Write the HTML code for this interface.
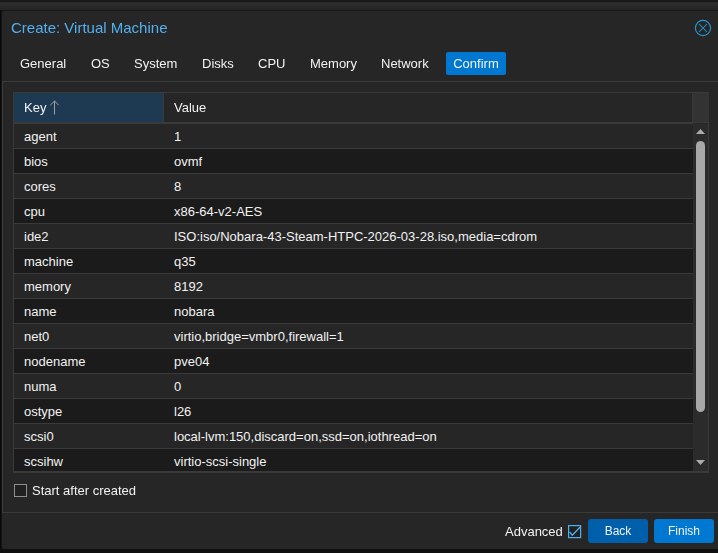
<!DOCTYPE html>
<html><head><meta charset="utf-8">
<style>
*{box-sizing:border-box;margin:0;padding:0}
html,body{width:718px;height:553px;overflow:hidden;background:#181818;font-family:"Liberation Sans",sans-serif;font-size:13px;color:#f2f2f2}
div,svg{position:absolute}
#topband{left:0;top:2px;width:718px;height:8px;background:linear-gradient(#282828 0px,#2d2d2d 1.5px,#292929 4px,#232323 8px)}
#leftshade{left:0;top:10px;width:2px;height:543px;background:linear-gradient(90deg,#080808 50%,#151515 50%)}
#botshade{left:0;top:549px;width:718px;height:4px;background:#0f0f0f}
#win{left:2px;top:11px;width:730px;height:538px;background:#262626;border-radius:3px}
.gs{will-change:transform}
#title{left:11px;top:19px;font-size:15px;color:#52b0ee;white-space:nowrap}
.tab{top:55px;height:17px;line-height:17px;white-space:nowrap}
#confirm{left:446px;top:52px;width:60px;height:23px;background:#0077d0;border-radius:2px;line-height:23px;text-align:center}
#body{left:2px;top:81px;width:730px;height:432px;border:1px solid #3a3a3a;border-right:none}
#grid{left:13px;top:92px;width:696px;height:381px;background:#262626;border:1px solid #3a3a3a;border-bottom-width:2px}
#hkey{left:14px;top:93px;width:149px;height:29px;background:#1d3a52}
#hsep{left:163px;top:93px;width:1px;height:29px;background:#3a3a3a}
#hsep2{left:692px;top:93px;width:1px;height:29px;background:#3a3a3a}
#hfill{left:693px;top:93px;width:16px;height:29px;background:#333333}
#hline{left:14px;top:122px;width:679px;height:2px;background:#3a3a3a}
#hline2{left:693px;top:122px;width:16px;height:1px;background:#3a3a3a}
.hdrtxt{top:100px;white-space:nowrap}
.row{left:14px;width:679px;height:25px;border-bottom:1px solid #3a3a3a}
.row span{position:absolute;top:5px;white-space:nowrap}
.row .k{left:10px}
.row .v{left:160px}
.odd{background:#262626}
.even{background:#1b1b1b}
#sb{left:693px;top:124px;width:15px;height:347px;background:#2b2b2b}
#thumb{left:696px;top:141px;width:9px;height:271px;background:#a8a8a8;border-radius:4.5px}
#start{left:14px;top:484px;width:13px;height:13px;border:1px solid #8e8e8e;background:#202020}
#startlbl{left:32px;top:483px;white-space:nowrap}
#adv{left:505px;top:524px;white-space:nowrap}
.btn{top:519px;height:24px;line-height:24px;text-align:center;border-radius:3px;color:#f2f2f2;font-size:12px}
#back{left:588px;width:60px;background:#005fab}
#finish{left:654px;width:60px;background:#0077d0}
</style></head><body>
<div id="topband"></div>
<div id="leftshade"></div>
<div id="botshade"></div>
<div id="win"></div>
<div id="title" class="gs">Create: Virtual Machine</div>
<svg style="left:694px;top:19px" width="18" height="18" viewBox="0 0 18 18"><circle cx="9" cy="9" r="7.6" fill="none" stroke="#2896d0" stroke-width="1.15"/><path d="M5 5L13 13M13 5L5 13" stroke="#2896d0" stroke-width="1.05"/></svg>
<div class="tab gs" style="left:20px">General</div>
<div class="tab gs" style="left:91px">OS</div>
<div class="tab gs" style="left:134px">System</div>
<div class="tab gs" style="left:202px">Disks</div>
<div class="tab gs" style="left:258px">CPU</div>
<div class="tab gs" style="left:310px">Memory</div>
<div class="tab gs" style="left:381px">Network</div>
<div id="confirm" class="gs">Confirm</div>
<div id="body"></div>
<div id="grid"></div>
<div id="hkey"></div>
<div id="hsep"></div>
<div id="hsep2"></div>
<div id="hfill"></div>
<div id="hline"></div>
<div id="hline2"></div>
<div class="hdrtxt gs" style="left:24px">Key</div>
<svg style="left:50px;top:100px" width="10" height="15" viewBox="0 0 10 15"><path d="M4.5 0.8V14.5M0.3 5.2L4.5 1L8.7 5.2" fill="none" stroke="#a0a0a0" stroke-width="1"/></svg>
<div class="hdrtxt gs" style="left:174px">Value</div>
<div class="row odd" style="top:124px;height:25px"><span class="k">agent</span><span class="v">1</span></div>
<div class="row even" style="top:149px;height:25px"><span class="k">bios</span><span class="v">ovmf</span></div>
<div class="row odd" style="top:174px;height:25px"><span class="k">cores</span><span class="v">8</span></div>
<div class="row even" style="top:199px;height:25px"><span class="k">cpu</span><span class="v">x86-64-v2-AES</span></div>
<div class="row odd" style="top:224px;height:25px"><span class="k">ide2</span><span class="v">ISO:iso/Nobara-43-Steam-HTPC-2026-03-28.iso,media=cdrom</span></div>
<div class="row even" style="top:249px;height:25px"><span class="k">machine</span><span class="v">q35</span></div>
<div class="row odd" style="top:274px;height:25px"><span class="k">memory</span><span class="v">8192</span></div>
<div class="row even" style="top:299px;height:25px"><span class="k">name</span><span class="v">nobara</span></div>
<div class="row odd" style="top:324px;height:25px"><span class="k">net0</span><span class="v">virtio,bridge=vmbr0,firewall=1</span></div>
<div class="row even" style="top:349px;height:25px"><span class="k">nodename</span><span class="v">pve04</span></div>
<div class="row odd" style="top:374px;height:25px"><span class="k">numa</span><span class="v">0</span></div>
<div class="row even" style="top:399px;height:25px"><span class="k">ostype</span><span class="v">l26</span></div>
<div class="row odd" style="top:424px;height:25px"><span class="k">scsi0</span><span class="v">local-lvm:150,discard=on,ssd=on,iothread=on</span></div>
<div class="row even" style="top:449px;height:22px;border-bottom:none"><span class="k">scsihw</span><span class="v">virtio-scsi-single</span></div>
<div id="sb"></div>
<svg style="left:695px;top:128px" width="11" height="7"><path d="M1 6L5.5 1L10 6Z" fill="#ababab"/></svg>
<div id="thumb"></div>
<svg style="left:695px;top:459px" width="11" height="7"><path d="M1 1L5.5 6L10 1Z" fill="#ababab"/></svg>
<div id="start"></div>
<div id="startlbl" class="gs">Start after created</div>
<div id="adv" class="gs">Advanced</div>
<svg style="left:568px;top:525px" width="14" height="14" viewBox="0 0 14 14"><rect x="0.6" y="0.6" width="12" height="12" fill="#202020" stroke="#4fb0f0" stroke-width="1.2"/><path d="M1.5 6.8L4.3 10.2L12.4 1.8" fill="none" stroke="#4fb0f0" stroke-width="1.3"/></svg>
<div id="back" class="btn gs">Back</div>
<div id="finish" class="btn gs">Finish</div>
</body></html>
